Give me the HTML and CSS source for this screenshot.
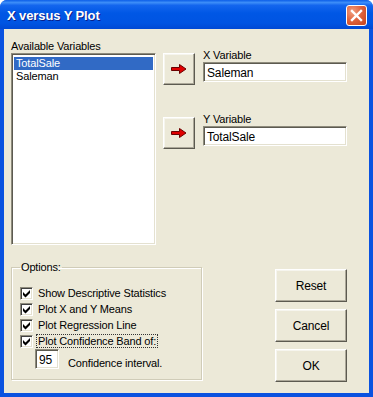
FILE: index.html
```html
<html>
  <head>
    <meta charset="UTF-8">
    <title>X versus Y Plot</title>
    <link rel="stylesheet" href="styles.css">
  </head>
  <body>
    <div class="window">
      <div class="titlebar">
        <span class="title">X versus Y Plot</span>
        <div class="close-btn">
          <svg width="13" height="13" viewBox="0 0 13 13">
            <path d="M2 2 L11 11 M11 2 L2 11" stroke="#fff" stroke-width="2.4" stroke-linecap="square"/>
          </svg>
        </div>
      </div>

      <div class="client">
        <div class="top">
          <div class="avail">
            <div class="label">Available Variables</div>
            <div class="listbox">
              <div class="item selected">TotalSale</div>
              <div class="item">Saleman</div>
            </div>
          </div>

          <div class="picker">
            <div class="pick-row">
              <div class="arrow-btn">
                <svg width="16" height="10" viewBox="0 0 16 10">
                  <path d="M0.5 3.5 H8.5 V0.5 L15 5 L8.5 9.5 V6.5 H0.5 Z" fill="#e00000" stroke="#6a0000" stroke-width="1"/>
                </svg>
              </div>
              <div class="field-group">
                <div class="label">X Variable</div>
                <div class="textbox">Saleman</div>
              </div>
            </div>
            <div class="pick-row second">
              <div class="arrow-btn">
                <svg width="16" height="10" viewBox="0 0 16 10">
                  <path d="M0.5 3.5 H8.5 V0.5 L15 5 L8.5 9.5 V6.5 H0.5 Z" fill="#e00000" stroke="#6a0000" stroke-width="1"/>
                </svg>
              </div>
              <div class="field-group">
                <div class="label">Y Variable</div>
                <div class="textbox">TotalSale</div>
              </div>
            </div>
          </div>
        </div>

        <div class="bottom">
          <fieldset class="options">
            <legend>Options:</legend>
            <div class="check-row"><span class="checkbox"></span><span>Show Descriptive Statistics</span></div>
            <div class="check-row"><span class="checkbox"></span><span>Plot X and Y Means</span></div>
            <div class="check-row"><span class="checkbox"></span><span>Plot Regression Line</span></div>
            <div class="check-row"><span class="checkbox"></span><span class="focused">Plot Confidence Band of:</span></div>
            <div class="conf-row">
              <div class="textbox small">95</div>
              <span class="conf-label">Confidence interval.</span>
            </div>
          </fieldset>

          <div class="buttons">
            <div class="button">Reset</div>
            <div class="button">Cancel</div>
            <div class="button">OK</div>
          </div>
        </div>
      </div>
    </div>
  </body>
</html>
```

FILE: styles.css
```css
body {
  margin: 0;
  padding: 0;
  background: #ffffff;
  font-family: "Liberation Sans", Arial, sans-serif;
  font-size: 11px;
  letter-spacing: -0.15px;
  color: #000;
}
.window {
  width: 373px;
  height: 397px;
  box-sizing: border-box;
  background: #0a52e0;
  border-radius: 7px 7px 0 0;
  padding: 0 4px 4px 4px;
  display: flex;
  flex-direction: column;
}
.titlebar {
  height: 29px;
  margin: 0 -4px;
  border-radius: 7px 7px 0 0;
  background: linear-gradient(#0c5ee8 0%, #3d8ef8 9%, #1466ee 18%, #0057e5 45%, #0054e2 80%, #0049d4 100%);
  display: flex;
  align-items: center;
  padding: 0 6px 0 7px;
}
.title {
  color: #fff;
  font-weight: bold;
  font-size: 13px;
  letter-spacing: -0.1px;
  text-shadow: 1px 1px #0a1f8a;
  flex: 1;
  padding-top: 1px;
}
.close-btn {
  width: 21px;
  height: 21px;
  box-sizing: border-box;
  border: 1px solid #fff;
  border-radius: 3px;
  background: radial-gradient(circle at 30% 30%, #f1a080 0%, #e0653f 45%, #c4421b 100%);
  display: flex;
  align-items: center;
  justify-content: center;
  margin-top: 1px;
}
.client {
  flex: 1;
  background: #ece9d8;
  padding: 10px 22px 0 7px;
}
.label {
  line-height: 14px;
  height: 14px;
}
.top {
  display: flex;
}
.avail {
  width: 145px;
}
.listbox {
  height: 192px;
  box-sizing: border-box;
  background: #fff;
  border: 1px solid;
  border-color: #8e8b7c #fff #fff #8e8b7c;
  box-shadow: inset 1px 1px #5c5a50, inset -1px -1px #e4e1d0;
  padding: 3px 2px;
}
.item {
  height: 13px;
  line-height: 13px;
  padding-left: 2px;
}
.item.selected {
  background: #316ac5;
  color: #fff;
}
.picker {
  margin-left: 7px;
  padding-top: 9px;
  flex: 1;
}
.pick-row {
  display: flex;
  align-items: flex-end;
}
.pick-row.second {
  margin-top: 27px;
}
.arrow-btn {
  width: 32px;
  height: 32px;
  box-sizing: border-box;
  border: 1px solid;
  border-color: #fff #5c5a50 #5c5a50 #fff;
  box-shadow: inset -1px -1px #aca899, inset 1px 1px #f6f5ee;
  display: flex;
  align-items: center;
  justify-content: center;
}
.field-group {
  margin-left: 8px;
  margin-bottom: 3px;
  flex: 1;
}
.textbox {
  height: 20px;
  box-sizing: border-box;
  background: #fff;
  border: 1px solid;
  border-color: #8e8b7c #fff #fff #8e8b7c;
  box-shadow: inset 1px 1px #5c5a50, inset -1px -1px #e4e1d0;
  padding: 3px 3px 0 3px;
  line-height: 14px;
  font-size: 12px;
}
.bottom {
  display: flex;
  align-items: flex-start;
}
.options {
  margin: 16px 0 0 0;
  width: 191px;
  box-sizing: border-box;
  border: 1px solid #d0ccb8;
  box-shadow: inset 1px 1px #fff, 1px 1px #fff;
  padding: 11px 0 10px 8px;
}
.options legend {
  padding: 0 1px;
  margin-left: 0;
  line-height: 13px;
}
.check-row {
  height: 16px;
  display: flex;
  align-items: center;
}
.checkbox {
  width: 13px;
  height: 13px;
  box-sizing: border-box;
  border: 1px solid;
  border-color: #8e8b7c #fff #fff #8e8b7c;
  box-shadow: inset 1px 1px #404040, inset -1px -1px #e4e1d0;
  background: #fff url("data:image/svg+xml,%3Csvg xmlns='http://www.w3.org/2000/svg' width='11' height='11'%3E%3Cpath d='M2 4 L4.5 6.5 L9 2 V5 L4.5 9.5 L2 7 Z' fill='%23000'/%3E%3C/svg%3E") no-repeat center;
  margin-right: 5px;
  flex: none;
}
.focused {
  outline: 1px dotted #333;
  outline-offset: 0;
  padding: 0 1px;
  margin-left: -1px;
  line-height: 12px;
}
.conf-row {
  display: flex;
  align-items: flex-end;
}
.textbox.small {
  width: 24px;
  margin-left: 15px;
}
.conf-label {
  margin-left: 9px;
  line-height: 14px;
  margin-bottom: -1px;
}
.buttons {
  margin-left: auto;
  margin-top: 24px;
  display: flex;
  flex-direction: column;
  gap: 7px;
}
.button {
  width: 72px;
  height: 33px;
  box-sizing: border-box;
  border: 1px solid;
  border-color: #fff #5c5a50 #5c5a50 #fff;
  box-shadow: inset -1px -1px #aca899, inset 1px 1px #f6f5ee;
  display: flex;
  align-items: center;
  justify-content: center;
  font-size: 12px;
}
```
